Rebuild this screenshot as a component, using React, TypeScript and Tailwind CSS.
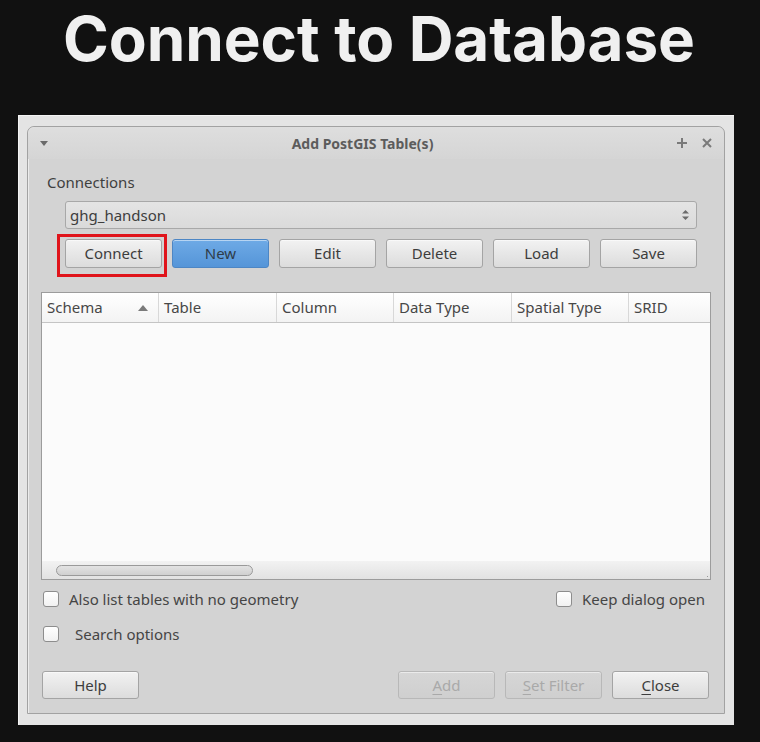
import React from 'react';

const ui = { fontFamily: '"Noto Sans", "Open Sans", sans-serif' };

function Button({ label, className = '', disabled = false, primary = false, underline }: { label: string; className?: string; disabled?: boolean; primary?: boolean; underline?: number }) {
  const look = primary
    ? 'border-[#4d86c4] bg-gradient-to-b from-[#6eaae6] to-[#5595d8] text-[#2f3c4a]'
    : disabled
      ? 'border-[#b8b8b8] bg-gradient-to-b from-[#d6d6d6] to-[#cfcfcf] text-[#a9a9a9]'
      : 'border-[#a4a4a4] bg-gradient-to-b from-[#f2f2f2] to-[#dcdcdc] text-[#3d3d3d]';
  const text =
    underline === undefined ? (
      label
    ) : (
      <>
        {label.slice(0, underline)}
        <span className="underline underline-offset-[3px]">{label[underline]}</span>
        {label.slice(underline + 1)}
      </>
    );
  return (
    <div className={`flex h-full items-center justify-center rounded-[3px] border text-[15px] shadow-[inset_0_1px_0_rgba(255,255,255,0.5)] ${look} ${className}`}>
      {text}
    </div>
  );
}

function Checkbox({ label, gap = 'gap-[10px]' }: { label: string; gap?: string }) {
  return (
    <div className={`flex items-center ${gap}`}>
      <div className="h-[16px] w-[16px] rounded-[3px] border border-[#8d8d8d] bg-gradient-to-b from-white to-[#f1f1f1]" />
      <span className="text-[15px] text-[#454545]">{label}</span>
    </div>
  );
}

const columns = [
  { name: 'Schema', w: 'w-[117px]', sort: true },
  { name: 'Table', w: 'w-[118px]' },
  { name: 'Column', w: 'w-[117px]' },
  { name: 'Data Type', w: 'w-[118px]' },
  { name: 'Spatial Type', w: 'w-[117px]' },
  { name: 'SRID', w: 'flex-1' },
];

export default function App() {
  return (
    <div className="h-[742px] w-[760px] bg-[#111111]">
      <div className="flex h-[115px] justify-center pt-[1px] pr-[2px]">
        <h1
          className="text-[62px] font-bold leading-[76px] tracking-[-0.1px] text-[#f0f0f0]"
          style={{ fontFamily: 'Inter, sans-serif' }}
        >
          Connect to Database
        </h1>
      </div>

      <div className="ml-[18px] h-[610px] w-[716px] border-l border-t border-[#f4f4f4] bg-[#e4e4e4] pl-[8px] pt-[10px]">
        <div
          className="flex h-[588px] w-[698px] flex-col rounded-t-[7px] border border-[#a2a2a2] bg-[#d3d3d3] shadow-[inset_1px_1px_0_#ececec]"
          style={ui}
        >
          <div className="flex h-[32px] items-center rounded-t-[7px] bg-gradient-to-b from-[#dedede] to-[#d5d5d5] pl-[12px] pr-[12px]">
            <svg width="8" height="5" viewBox="0 0 8 5" className="mt-[1px]">
              <path d="M0 0h8L4 5z" fill="#6a6a6a" />
            </svg>
            <div className="flex-1 text-center text-[14px] font-bold text-[#5c5c5c]">Add PostGIS Table(s)</div>
            <svg width="10" height="10" viewBox="0 0 10 10" className="mr-[15px]">
              <path d="M5 0v10M0 5h10" stroke="#7a7a7a" strokeWidth="2" />
            </svg>
            <svg width="10" height="10" viewBox="0 0 10 10">
              <path d="M1 1l8 8M9 1l-8 8" stroke="#7a7a7a" strokeWidth="2" />
            </svg>
          </div>

          <div className="ml-[19px] mt-[13px] h-[20px] text-[15px] leading-[20px] text-[#3f3f3f]">Connections</div>

          <div className="ml-[37px] mt-[9px] flex h-[28px] w-[632px] items-center justify-between rounded-[3px] border border-[#a8a8a8] bg-gradient-to-b from-[#e4e4e4] to-[#dadada] pl-[4px] pr-[7px]">
            <span className="text-[15px] text-[#3d3d3d]">ghg_handson</span>
            <svg width="7" height="12" viewBox="0 0 7 12">
              <path d="M0 4.5L3.5 1L7 4.5zM0 7.5L3.5 11L7 7.5z" fill="#6b6b6b" />
            </svg>
          </div>

          <div className="relative ml-[37px] mt-[10px] grid h-[29px] w-[632px] grid-cols-6 gap-[10px]">
            <Button label="Connect" />
            <Button label="New" primary />
            <Button label="Edit" />
            <Button label="Delete" />
            <Button label="Load" />
            <Button label="Save" />
            <div className="pointer-events-none absolute left-[-8px] top-[-5px] h-[43px] w-[110px] border-[3px] border-[#e0141b]" />
          </div>

          <div className="ml-[13px] mt-[24px] flex h-[288px] w-[670px] flex-col border border-[#9c9c9c] bg-[#fbfbfb]">
            <div className="flex h-[30px] border-b border-[#c4c4c4] bg-gradient-to-b from-white to-[#f3f3f3]">
              {columns.map((c) => (
                <div key={c.name} className={`flex items-center justify-between border-r border-[#d8d8d8] pl-[5px] pr-[10px] text-[15px] text-[#474747] last:border-r-0 ${c.w}`}>
                  <span>{c.name}</span>
                  {c.sort && (
                    <svg width="10" height="6" viewBox="0 0 10 6">
                      <path d="M0 6L5 0l5 6z" fill="#7a7a7a" />
                    </svg>
                  )}
                </div>
              ))}
            </div>
            <div className="flex-1" />
            <div className="relative flex h-[18px] items-center bg-gradient-to-b from-[#f2f2f2] to-[#e2e2e2] pl-[14px]">
              <div className="h-[11px] w-[197px] rounded-full border border-[#9a9a9a] bg-gradient-to-b from-[#e3e3e3] to-[#d0d0d0]" />
              <div className="absolute bottom-[2px] right-[2px] h-[1px] w-[1px] bg-[#999]" />
            </div>
          </div>

          <div className="ml-[15px] mr-[19px] mt-[9px] flex h-[20px] items-center justify-between">
            <Checkbox label="Also list tables with no geometry" />
            <Checkbox label="Keep dialog open" />
          </div>
          <div className="ml-[15px] mt-[15px] flex h-[20px] items-center">
            <Checkbox label="Search options" gap="gap-[16px]" />
          </div>

          <div className="ml-[14px] mr-[15px] mt-[27px] flex h-[28px] items-center">
            <div className="h-full w-[97px]">
              <Button label="Help" />
            </div>
            <div className="flex-1" />
            <div className="flex h-full gap-[10px]">
              <div className="h-full w-[97px]">
                <Button label="Add" disabled underline={0} />
              </div>
              <div className="h-full w-[97px]">
                <Button label="Set Filter" disabled underline={0} />
              </div>
              <div className="h-full w-[97px]">
                <Button label="Close" underline={0} />
              </div>
            </div>
          </div>
        </div>
      </div>
    </div>
  );
}
